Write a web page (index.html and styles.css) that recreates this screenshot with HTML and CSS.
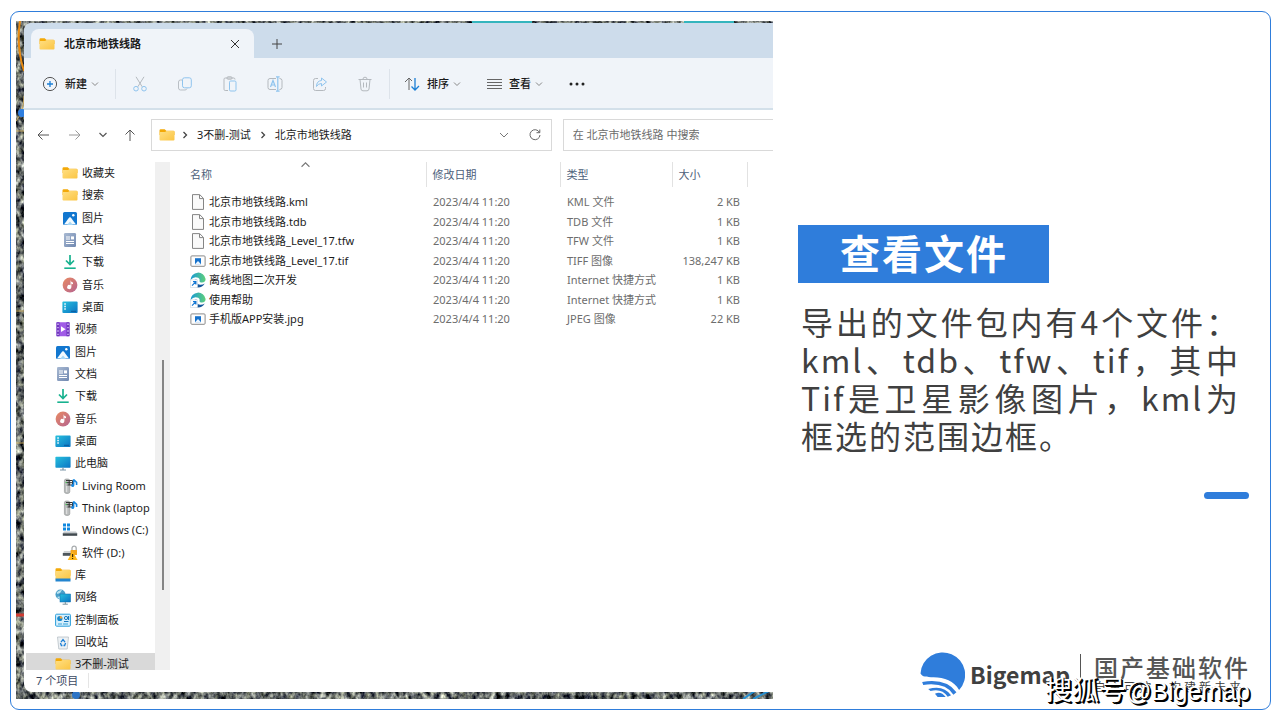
FILE: index.html
```html
<!DOCTYPE html>
<html lang="zh-CN">
<head>
<meta charset="utf-8">
<title>查看文件</title>
<link rel="stylesheet" href="styles.css">
</head>
<body>
<svg class="defs" aria-hidden="true">
  <defs>
    <linearGradient id="gold" x1="0" y1="0" x2="1" y2="1"><stop offset="0" stop-color="#ffdf83"/><stop offset="1" stop-color="#fbc543"/></linearGradient>
    <linearGradient id="sea" x1="0" y1="0" x2="1" y2="1"><stop offset="0" stop-color="#27c0dd"/><stop offset="1" stop-color="#0b74c4"/></linearGradient>
    <linearGradient id="rose" x1="0" y1="0" x2="1" y2="1"><stop offset="0" stop-color="#e98a62"/><stop offset="1" stop-color="#b56491"/></linearGradient>
    <linearGradient id="slate" x1="0" y1="0" x2="1" y2="1"><stop offset="0" stop-color="#a8b9d2"/><stop offset="1" stop-color="#7088b0"/></linearGradient>
    <linearGradient id="edgegreen" x1="0" y1="0" x2="1" y2="0"><stop offset="0" stop-color="#1899d6"/><stop offset="1" stop-color="#5fd07a"/></linearGradient>
  </defs>
  <symbol id="folder" viewBox="0 0 16 16"><path d="M.5 3.4q0-1.2 1.2-1.2h4l1.6 1.5h7q1.2 0 1.2 1.2V8H.5z" fill="#f3a908"/><path d="M.5 6q0-.9 1-.9h4.6l1.4-1h7q1 0 1 1v7.4q0 1-1 1h-13q-1 0-1-1z" fill="url(#gold)"/></symbol>
  <symbol id="library" viewBox="0 0 16 16"><path d="M.5 2.2q0-1 1-1h4l1.6 1.5h7.4q1 0 1 1v5H.5z" fill="#f3a908"/><path d="M.5 5q0-.9 1-.9h4.6l1.4-1h7q1 0 1 1v8.4H.5z" fill="url(#gold)"/><path d="M.5 11.5h15v3H.5z" fill="#2385cf"/></symbol>
  <symbol id="picture" viewBox="0 0 16 16"><rect x="1" y="2" width="14" height="13" rx="1.5" fill="#1277cf"/><path d="M2 14.6l5.2-7q.8-.9 1.6 0l5.2 7z" fill="#f4fbff"/><path d="M5 15l3-3.5 3 3.5z" fill="#a9d9f7"/><circle cx="11.3" cy="5.2" r="1.2" fill="#fff"/></symbol>
  <symbol id="doc" viewBox="0 0 16 16"><rect x="2" y="1" width="12" height="14" rx="1.2" fill="url(#slate)"/><path d="M4 5h4M4 7h4M4 9.5h8M4 11.5h8" stroke="#fff"/><rect x="9" y="4.4" width="3" height="3" fill="#fff"/></symbol>
  <symbol id="download" viewBox="0 0 16 16"><path d="M8 1v9M4 6.5l4 4 4-4" fill="none" stroke="#18b28f" stroke-width="1.7"/><path d="M2.3 14.2h11.4" stroke="#18b28f" stroke-width="1.6"/></symbol>
  <symbol id="music" viewBox="0 0 16 16"><circle cx="8" cy="8" r="7.4" fill="url(#rose)"/><path d="M8.6 3.2q.6 2.2 2.4 2.4v1.6q-1 0-1.6-.7V10a2.1 2.1 0 1 1-.9-1.7z" fill="#fff"/></symbol>
  <symbol id="desktop" viewBox="0 0 16 16"><rect x=".4" y="2.5" width="15.2" height="11.5" rx="1" fill="url(#sea)"/><path d="M2.3 5h1.5M2.3 7.5h1.5M2.3 10h1.5" stroke="#fff" stroke-width="1.4"/><path d="M9 12.3h5" stroke="#0a599b"/></symbol>
  <symbol id="video" viewBox="0 0 16 16"><rect x="1.5" y="1.2" width="13" height="14" rx="1" fill="#a05be6"/><path d="M1.5 1.2h3v14h-3zM11.5 1.2h3v14h-3z" fill="#6e35bd"/><path d="M3 2.5v12M13 2.5v12" stroke="#e8d5ff" stroke-width="1.2" stroke-dasharray="1.4 2"/><path d="M6 5.2l4.6 3L6 11z" fill="#fff"/></symbol>
  <symbol id="pc" viewBox="0 0 16 16"><rect x=".4" y="1.8" width="15.2" height="11" rx=".8" fill="url(#sea)"/><path d="M8 12.5v2.3M5 15h6" stroke="#7d95a7" stroke-width="1.2"/></symbol>
  <symbol id="server" viewBox="0 0 16 16"><rect x="2.4" y="1" width="5.4" height="14.4" rx="1.8" fill="#b9bcbc" stroke="#8d9090" stroke-width=".6"/><path d="M4.7 8v6" stroke="#e7e7e7"/><path d="M4 2.500h6.500v4.500H5.500M7.200 2v5M5 4.700h5.500" fill="none" stroke="#333"/><circle cx="4.300" cy="4.500" r=".8" fill="#3fb54a"/><path d="M11.600 1.200v6M11.600 1.600l3 2.800v2.600" fill="none" stroke="#1787df" stroke-width="1.600"/><circle cx="10.700" cy="7.600" r="1.500" fill="#1787df"/></symbol>
  <symbol id="windrive" viewBox="0 0 16 16"><path d="M1 1.5h3v3H1zM5 1.5h3v3H5zM1 5.4h3v3H1zM5 5.4h3v3H5z" fill="#1088df"/><path d="M2 9.5h12l1.5 2h-15z" fill="#c4c8cb"/><path d="M.8 11.3h14.4v2.5H.8z" fill="#41494f"/></symbol>
  <symbol id="lockdrive" viewBox="0 0 16 16"><path d="M2 6h10v2.2H1z" fill="#cfd2d4"/><path d="M.8 8h9v2.8h-9z" fill="#4e565b"/><path d="M10 5V3.3a2.1 2.1 0 0 1 4.2 0V7" fill="none" stroke="#a7abad" stroke-width="1.3"/><rect x="8.6" y="5" width="6.4" height="5" fill="#f4a51d"/><path d="M10.6 6.2l5 8.9H5.7z" fill="#ffb91c"/><path d="M10.6 9v3M10.6 13v1" stroke="#3b2b05" stroke-width="1.2"/></symbol>
  <symbol id="network" viewBox="0 0 16 16"><circle cx="5.5" cy="5.5" r="5" fill="#4a9fc9"/><path d="M1.5 3.5q3-3 5.5-2.5L5 4l-2.5 1zM2 8l4-1 1 3-2 .6z" fill="#b9e3f0"/><rect x="5" y="5" width="10.6" height="8" fill="url(#sea)" stroke="#0c6daf" stroke-width=".5"/><path d="M10.3 13v2M7.6 15.2h5.2" stroke="#78909c"/></symbol>
  <symbol id="panel" viewBox="0 0 16 16"><rect x=".6" y="2.2" width="14.8" height="12" rx="1" fill="#d6effc" stroke="#2a9edb"/><circle cx="4.8" cy="6.5" r="2.6" fill="#1688ce"/><path d="M4.8 6.500V3.900a2.600 2.600 0 0 1 2.600 2.600z" fill="#f6a13a"/><circle cx="11" cy="6" r="1.600" fill="none" stroke="#1677bd"/><path d="M9 9.500h4.500M13.500 4v4" stroke="#1677bd" stroke-width="1.2"/><path d="M3 12h4M8 12h5" stroke="#37a3d9"/></symbol>
  <symbol id="bin" viewBox="0 0 16 16"><path d="M2.5 3h11l-1.3 12H3.8z" fill="#edf1f4" stroke="#b7c0c7" stroke-width=".8"/><path d="M6 8.2l2-2.6 2 2.6M10.6 9l-1 2.5H8.5M5.4 9l1 2.5h1" fill="none" stroke="#1b7fd5" stroke-width="1.3"/></symbol>
  <symbol id="file" viewBox="0 0 16 16"><path d="M2.5.6h7.2l3.8 3.8v11H2.5z" fill="#fafafa" stroke="#858585"/><path d="M9.5.8v3.8h3.8" fill="none" stroke="#858585"/></symbol>
  <symbol id="image" viewBox="0 0 16 16"><rect x=".9" y="2.9" width="14.2" height="10.4" rx="1" fill="#fdfdfd" stroke="#8a8a8a"/><path d="M5 5.2h6v6H5z" fill="#1672cc"/><path d="M5 11.2l3-3.2 3 3.2z" fill="#e9f4ff"/></symbol>
  <symbol id="edge" viewBox="0 0 16 16"><path d="M.5 8A7.6 7.6 0 0 1 15.6 7q0 3.3-3.6 3.600-2.800 0-2.400-1.800.6-2-1.400-3Q4 4 .5 8z" fill="url(#edgegreen)"/><path d="M6.600 7.500q-.8 5 3.400 5.300 2.600.2 4.700-1.200-2.200 4-6.700 4-5-.6-5-5 .4-3 3.600-3.100z" fill="#12569b"/><rect x=".5" y="7.900" width="7" height="7.500" fill="#fff" stroke="#c8d7e2" stroke-width=".6"/><path d="M2 13.600l3.700-3.700M3 9.700h2.900v2.900" fill="none" stroke="#1478d4" stroke-width="1.200"/></symbol>
  <symbol id="down" viewBox="0 0 8 8"><path d="M1 2.500l3 3 3-3" fill="none" stroke="currentColor"/></symbol>
  <symbol id="right" viewBox="0 0 8 8"><path d="M2.500 1l3 3-3 3" fill="none" stroke="currentColor" stroke-width="1.300"/></symbol>
</svg>

<main class="frame">
  <section class="shot" aria-label="文件资源管理器">
    <svg class="map" aria-hidden="true">
      <filter id="city" x="0" y="0" width="100%" height="100%" color-interpolation-filters="sRGB">
        <feTurbulence type="fractalNoise" baseFrequency=".2 .15" numOctaves="3" seed="7"/>
        <feColorMatrix values="1.500 .2 0 0 -.450  1.500 .2 0 0 -.430  1.300 .3 .1 0 -.440  0 0 0 0 1"/>
      </filter>
      <rect width="100%" height="100%" filter="url(#city)"/>
      <path d="M4 0q-4 25 4 50" fill="none" stroke="#e98b12" stroke-width="2"/>
      <path d="M0 100q8-10 8-25M0 110h8M0 290h8M0 422h8" fill="none" stroke="#c9a961"/>
      <path d="M0 594h8" stroke="#d13c33" stroke-width="3"/>
      <circle cx="6" cy="92" r="4" fill="#2f7fe0"/>
      <path d="M456 1h60M668 1h50" stroke="#35b5bd" stroke-width="2"/>
      <circle cx="60" cy="674" r="4" fill="#2c73c4"/>
      <path d="M727 678l12-8h14l-16 8" fill="none" stroke="#268fd1" stroke-width="2"/>
    </svg>
    <div class="explorer">
      <header class="tabs">
        <div class="tab">
          <svg class="ico"><use href="#folder"/></svg>
          <b class="tab-name">北京市地铁线路</b>
          <button class="plain" aria-label="关闭标签页"><svg width="10" height="10" viewBox="0 0 10 10"><path d="M1 1l8 8M9 1l-8 8" stroke="#333"/></svg></button>
        </div>
        <button class="plain new-tab" aria-label="新标签页"><svg width="10" height="10" viewBox="0 0 10 10"><path d="M5 0v10M0 5h10" stroke="#444"/></svg></button>
      </header>

      <div class="toolbar">
        <button class="plain cmd"><svg width="16" height="16" viewBox="0 0 16 16" fill="none"><circle cx="8" cy="8" r="6.600" stroke="#555"/><path d="M8 5v6M5 8h6" stroke="#1b7fd5" stroke-width="1.300"/></svg><span>新建</span><svg class="chev"><use href="#down"/></svg></button>
        <div class="tools">
          <button class="plain" aria-label="剪切"><svg width="16" height="16" viewBox="0 0 16 16" fill="none"><path d="M4 .8l6.200 10M12 .8l-6.200 10" stroke="#b4b9be"/><circle cx="4" cy="12.700" r="2.300" stroke="#8fc4ee"/><circle cx="12" cy="12.700" r="2.300" stroke="#8fc4ee"/></svg></button>
          <button class="plain" aria-label="复制"><svg width="16" height="16" viewBox="0 0 16 16" fill="none"><path d="M5 4H3.500Q1.500 4 1.500 6v6q0 2 2 2H8q1.500 0 2-1.500" stroke="#b9bfc5"/><rect x="5.500" y="1.800" width="8.800" height="10" rx="2" stroke="#8fc4ee"/></svg></button>
          <button class="plain" aria-label="粘贴"><svg width="16" height="16" viewBox="0 0 16 16" fill="none"><path d="M6 14.500H3.200q-1.200 0-1.200-1.200V3.200Q2 2 3.200 2h8.600Q13 2 13 3.500" stroke="#b4b9be"/><rect x="5" y=".8" width="5" height="2.400" rx="1" stroke="#b4b9be"/><rect x="7.500" y="5" width="6.500" height="10" rx="1.200" stroke="#8fc4ee"/></svg></button>
          <button class="plain" aria-label="重命名"><svg width="16" height="16" viewBox="0 0 16 16" fill="none"><path d="M9 2.500H3q-2 0-2 2v7q0 2 2 2h6M12.500 2.500q2.500 0 2.500 2v7q0 2-2.500 2" stroke="#b4b9be"/><path d="M3.500 11l2.500-6.500L8.500 11M4.400 9h3.200M10.800 1v14M9 .9h3.600M9 15.100h3.600" stroke="#8fc4ee" stroke-width="1.200"/></svg></button>
          <button class="plain" aria-label="共享"><svg width="16" height="16" viewBox="0 0 16 16" fill="none"><path d="M6 2.500H3.500q-2 0-2 2v8q0 2 2 2h8q2 0 2-2V11" stroke="#b4b9be"/><path d="M9.500 2l5 4-5 4V7.500Q6 7.500 4.500 10.500 4.500 5 9.500 4.500z" stroke="#8fc4ee" stroke-linejoin="round"/></svg></button>
          <button class="plain" aria-label="删除"><svg width="16" height="16" viewBox="0 0 16 16" fill="none" stroke="#b4b9be"><path d="M1.500 3.500h13M6 3q0-1.800 2-1.800T10 3M3 3.500l1 9.500q.2 1.800 2 1.800h4q1.800 0 2-1.800l1-9.500M6.500 6.500v5M9.500 6.500v5"/></svg></button>
        </div>
        <button class="plain cmd"><svg width="16" height="16" viewBox="0 0 16 16" fill="none"><path d="M5 14V2M1 6l4-4 3 3" stroke="#666"/><path d="M11 2v12M7.500 10.500L11 14l4-4" stroke="#1b7fd5" stroke-width="1.300"/></svg><span>排序</span><svg class="chev"><use href="#down"/></svg></button>
        <button class="plain cmd view"><svg width="16" height="16" viewBox="0 0 16 16"><path d="M1 3.500h15M1 6.500h15M1 9.500h15M1 12.500h15" stroke="#666"/></svg><span>查看</span><svg class="chev"><use href="#down"/></svg></button>
        <button class="plain more" aria-label="更多"><svg width="16" height="16" viewBox="0 0 16 16" fill="#222"><circle cx="2" cy="8" r="1.500"/><circle cx="8" cy="8" r="1.500"/><circle cx="14" cy="8" r="1.500"/></svg></button>
      </div>

      <div class="address-row">
        <div class="nav-buttons">
          <button class="plain" aria-label="后退"><svg width="12" height="12" viewBox="0 0 12 12" fill="none" stroke="#555"><path d="M12 6H1M5.500 1.500L1 6l4.500 4.500"/></svg></button>
          <button class="plain" aria-label="前进"><svg width="12" height="12" viewBox="0 0 12 12" fill="none" stroke="#999"><path d="M0 6h11M6.500 1.500L11 6l-4.500 4.500"/></svg></button>
          <button class="plain" aria-label="最近位置"><svg width="12" height="12" viewBox="0 0 12 12" fill="none" stroke="#555"><path d="M2.500 4L6 7.500 9.500 4" stroke-width="1.200"/></svg></button>
          <button class="plain" aria-label="上移"><svg width="12" height="12" viewBox="0 0 12 12" fill="none" stroke="#555"><path d="M6 12V1M1.500 5.500L6 1l4.500 4.500"/></svg></button>
        </div>
        <div class="address">
          <svg class="ico"><use href="#folder"/></svg>
          <svg class="chev dark"><use href="#right"/></svg>
          <a href="#">3不删-测试</a>
          <svg class="chev dark"><use href="#right"/></svg>
          <a href="#">北京市地铁线路</a>
          <button class="plain history" aria-label="历史记录"><svg width="10" height="10" viewBox="0 0 10 10"><path d="M1 3l4 4 4-4" fill="none" stroke="#777"/></svg></button>
          <button class="plain" aria-label="刷新"><svg width="12" height="12" viewBox="0 0 12 12" fill="none" stroke="#666"><path d="M10.500 3.500A5 5 0 1 0 11 6M10.800 .5v3.200H7.500"/></svg></button>
        </div>
        <input class="search" type="text" aria-label="搜索" placeholder="在 北京市地铁线路 中搜索">
      </div>

      <div class="content">
        <nav class="tree" aria-label="导航窗格">
          <ul>
            <li class="deep"><a href="#"><svg class="ico"><use href="#folder"/></svg>收藏夹</a></li>
            <li class="deep"><a href="#"><svg class="ico"><use href="#folder"/></svg>搜索</a></li>
            <li class="deep"><a href="#"><svg class="ico"><use href="#picture"/></svg>图片</a></li>
            <li class="deep"><a href="#"><svg class="ico"><use href="#doc"/></svg>文档</a></li>
            <li class="deep"><a href="#"><svg class="ico"><use href="#download"/></svg>下载</a></li>
            <li class="deep"><a href="#"><svg class="ico"><use href="#music"/></svg>音乐</a></li>
            <li class="deep"><a href="#"><svg class="ico"><use href="#desktop"/></svg>桌面</a></li>
            <li><a href="#"><svg class="ico"><use href="#video"/></svg>视频</a></li>
            <li><a href="#"><svg class="ico"><use href="#picture"/></svg>图片</a></li>
            <li><a href="#"><svg class="ico"><use href="#doc"/></svg>文档</a></li>
            <li><a href="#"><svg class="ico"><use href="#download"/></svg>下载</a></li>
            <li><a href="#"><svg class="ico"><use href="#music"/></svg>音乐</a></li>
            <li><a href="#"><svg class="ico"><use href="#desktop"/></svg>桌面</a></li>
            <li><a href="#"><svg class="ico"><use href="#pc"/></svg>此电脑</a></li>
            <li class="deep"><a href="#"><svg class="ico"><use href="#server"/></svg>Living Room</a></li>
            <li class="deep"><a href="#"><svg class="ico"><use href="#server"/></svg>Think (laptop</a></li>
            <li class="deep"><a href="#"><svg class="ico"><use href="#windrive"/></svg>Windows (C:)</a></li>
            <li class="deep"><a href="#"><svg class="ico"><use href="#lockdrive"/></svg>软件 (D:)</a></li>
            <li><a href="#"><svg class="ico"><use href="#library"/></svg>库</a></li>
            <li><a href="#"><svg class="ico"><use href="#network"/></svg>网络</a></li>
            <li><a href="#"><svg class="ico"><use href="#panel"/></svg>控制面板</a></li>
            <li><a href="#"><svg class="ico"><use href="#bin"/></svg>回收站</a></li>
            <li class="current"><a href="#"><svg class="ico"><use href="#folder"/></svg>3不删-测试</a></li>
          </ul>
        </nav>
        <div class="scroll"><div class="thumb"></div></div>
        <div class="files">
          <svg class="sort" viewBox="0 0 8 8"><path d="M.5 6L4 2.500 7.500 6" fill="none" stroke="#777"/></svg>
          <table>
            <colgroup><col class="c-name"><col class="c-date"><col class="c-type"><col class="c-size"></colgroup>
            <thead><tr><th>名称</th><th>修改日期</th><th>类型</th><th>大小</th></tr></thead>
            <tbody>
              <tr><td><span class="name"><svg class="ico"><use href="#file"/></svg>北京市地铁线路.kml</span></td><td>2023/4/4 11:20</td><td>KML 文件</td><td>2 KB</td></tr>
              <tr><td><span class="name"><svg class="ico"><use href="#file"/></svg>北京市地铁线路.tdb</span></td><td>2023/4/4 11:20</td><td>TDB 文件</td><td>1 KB</td></tr>
              <tr><td><span class="name"><svg class="ico"><use href="#file"/></svg>北京市地铁线路_Level_17.tfw</span></td><td>2023/4/4 11:20</td><td>TFW 文件</td><td>1 KB</td></tr>
              <tr><td><span class="name"><svg class="ico"><use href="#image"/></svg>北京市地铁线路_Level_17.tif</span></td><td>2023/4/4 11:20</td><td>TIFF 图像</td><td>138,247 KB</td></tr>
              <tr><td><span class="name"><svg class="ico"><use href="#edge"/></svg>离线地图二次开发</span></td><td>2023/4/4 11:20</td><td>Internet 快捷方式</td><td>1 KB</td></tr>
              <tr><td><span class="name"><svg class="ico"><use href="#edge"/></svg>使用帮助</span></td><td>2023/4/4 11:20</td><td>Internet 快捷方式</td><td>1 KB</td></tr>
              <tr><td><span class="name"><svg class="ico"><use href="#image"/></svg>手机版APP安装.jpg</span></td><td>2023/4/4 11:20</td><td>JPEG 图像</td><td>22 KB</td></tr>
            </tbody>
          </table>
        </div>
      </div>
      <footer class="status"><span>7 个项目</span></footer>
    </div>
  </section>

  <section class="side">
    <h1>查看文件</h1>
    <p class="desc">导出的文件包内有4个文件：kml、tdb、tfw、tif，其中Tif是卫星影像图片，kml为框选的范围边框。</p>
    <div class="dash"></div>
    <div class="brand">
      <svg class="logo" viewBox="0 0 133 137" role="img" aria-label="Bigemap"><g fill="#2f7ddb"><path d="M1 67A66.500 66.500 0 1 1 116 116C101 89 72 78 40 78 18 78 6 77 1 67z"/><path d="M6 92Q78 80 108 123L99 130Q75 92 9 101z"/><path d="M24 113Q70 100 92 132L82 136Q64 110 31 119z"/><path d="M44 127Q62 118 76 137H52z"/></g></svg>
      <strong class="word">Bigemap</strong>
      <div class="slogan"><div class="slogan-main">国产基础软件</div><div class="slogan-sub">自主可控，构建新未来</div></div>
      <div class="watermark">搜狐号<span>@Bigemap</span></div>
    </div>
  </section>
</main>
</body>
</html>
```
FILE: styles.css
```css
* { box-sizing: border-box; }
body {
  margin: 0;
  min-height: 100vh;
  padding: 11px 9px 10px 10px;
  display: flex;
  background: #fff;
  color: #1b1b1b;
  font: 11px/16px "Noto Sans", "Noto Sans CJK SC", sans-serif;
}
.defs { position: absolute; width: 0; height: 0; }
svg { display: block; flex: none; }
a { color: inherit; text-decoration: none; }
.ico { width: 16px; height: 16px; }
.chev { width: 8px; height: 8px; color: #888; }
.chev.dark { color: #444; }
.plain {
  display: flex;
  align-items: center;
  justify-content: center;
  padding: 0;
  border: 0;
  background: none;
  color: inherit;
  font: inherit;
}

.frame {
  flex: 1;
  display: grid;
  grid-template-columns: 757fr 451fr;
  column-gap: 25px;
  padding: 9px 21px 10px 5px;
  border: 1px solid #2f7ddb;
  border-radius: 9px;
}
.shot {
  position: relative;
  display: flex;
  min-width: 0;
  padding: 2px 0 7px 8px;
}
.map { position: absolute; inset: 0; width: 100%; height: 100%; }

.explorer {
  position: relative;
  flex: 1;
  min-width: 0;
  display: flex;
  flex-direction: column;
  overflow: hidden;
  background: #fff;
  border-radius: 8px 0 0 8px;
}
.tabs {
  display: flex;
  height: 35px;
  padding: 6px 0 0 7px;
  background: #cddceb;
}
.tab {
  display: flex;
  align-items: center;
  width: 223px;
  padding: 0 14px 0 8px;
  background: #f0f4f9;
  border-radius: 8px 8px 0 0;
}
.tab-name { flex: 1; margin-left: 9px; }
.new-tab { width: 46px; }

.toolbar {
  display: flex;
  align-items: center;
  height: 52px;
  padding: 1px 0 0 18px;
  background: #f0f4f9;
  border-bottom: 2px solid #d3e0ea;
}
.cmd { gap: 7px; font-weight: 500; }
.cmd .chev { margin-left: -3px; }
.tools {
  display: flex;
  gap: 29px;
  margin: 0 14px 0 16px;
  padding: 7px 16px;
  border: solid #dde3ea;
  border-width: 0 1px;
}
.view { margin-left: 25px; }
.more { margin-left: 26px; }

.address-row {
  display: flex;
  height: 50px;
  padding: 9px 0 9px 13px;
}
.nav-buttons { display: flex; gap: 20px; padding-right: 15px; }
.nav-buttons .plain:nth-child(2) { margin-right: -4px; }
.nav-buttons .plain:nth-child(3) { margin-right: -5px; }
.address {
  flex: 381;
  display: flex;
  align-items: center;
  gap: 8px;
  padding: 0 10px 0 7px;
  border: 1px solid #d9d9d9;
}
.address .ico { margin-right: -2px; }
.history { margin: 0 12px 0 auto; }
.search {
  flex: 191;
  min-width: 0;
  margin-left: 11px;
  padding: 0 9px;
  border: 1px solid #d9d9d9;
  border-right: 0;
  background: #fff;
  font: inherit;
}
.search::placeholder { color: #6b6b6b; opacity: 1; }

.content { flex: 1; display: flex; min-height: 0; padding-top: 2px; }
.tree { width: 131px; height: 508px; overflow: hidden; }
.tree ul { margin: 0; padding: 0; list-style: none; }
.tree li { height: 22px; padding-left: 31px; white-space: nowrap; }
.tree li:nth-child(3n) { height: 23px; }
.tree li.deep { padding-left: 38px; }
.tree li.current { margin-left: 2px; padding-left: 29px; background: #d9d9d9; }
.tree a { display: flex; align-items: center; gap: 4px; height: 100%; }
.scroll { width: 15px; padding: 198px 0 0 7px; background: #f0f0f0; }
.thumb { width: 2px; height: 230px; background: #858585; }

.files { position: relative; flex: 1; padding-left: 10px; }
.sort { position: absolute; left: 131px; top: -2px; width: 9px; height: 9px; }
table { border-collapse: collapse; table-layout: fixed; width: 567px; }
.c-name { width: 246px; }
.c-date { width: 134px; }
.c-type { width: 112px; }
.c-size { width: 75px; }
th {
  height: 25px;
  padding: 0 6px;
  border-right: 1px solid #e2e2e2;
  color: #4c607a;
  font-weight: 400;
  text-align: left;
}
th:first-child { padding-left: 10px; }
td { height: 20px; padding: 0 7px; color: #6d6d6d; white-space: nowrap; }
tr:nth-child(even) td { height: 19px; }
tbody tr:first-child td { height: 25px; padding-top: 5px; }
td:first-child { padding-left: 10px; color: #1b1b1b; }
td:last-child { text-align: right; }
.name { display: flex; align-items: center; gap: 3px; }

.status { height: 22px; padding: 3px 0 0 12px; color: #3c4a63; }
.status span { padding-right: 10px; border-right: 1px solid #e5e5e5; }

.side { display: flex; flex-direction: column; padding-top: 204px; font-family: "Noto Sans CJK SC", sans-serif; }
h1 {
  align-self: flex-start;
  margin: 0 0 19px;
  padding: 0 41px 4px 42px;
  background: #2f7ddb;
  color: #fff;
  font-size: 40px;
  font-weight: 700;
  line-height: 54px;
  letter-spacing: 2px;
}
.desc {
  margin: 0;
  padding: 0 9px 0 3px;
  color: #404040;
  font-size: 32px;
  line-height: 38px;
  letter-spacing: 2px;
  text-align: justify;
}
.dash { align-self: flex-end; width: 45px; height: 7px; margin-top: 38px; border-radius: 4px; background: #2f7ddb; }
.brand {
  position: relative;
  display: flex;
  align-items: center;
  justify-content: flex-end;
  margin: auto -1px 2px 0;
  color: #404040;
}
.logo { width: 45px; height: 46px; }
.word { margin: 0 10px 0 5px; font-size: 23px; line-height: 44px; }
.slogan { padding-left: 13px; border-left: 1px solid #555; white-space: nowrap; }
.slogan-main { color: #555; font-size: 24px; font-weight: 500; line-height: 26px; letter-spacing: 2px; }
.slogan-sub { font-size: 12px; line-height: 14px; letter-spacing: 3px; }
.watermark {
  position: absolute;
  right: 0;
  bottom: -11px;
  color: #fff;
  font-size: 27px;
  line-height: 34px;
  white-space: nowrap;
  text-shadow: 1px 1px 0 #000, 2px 2px 0 #000;
}
.watermark span { font-family: "Liberation Sans", sans-serif; font-size: 25px; }
```
